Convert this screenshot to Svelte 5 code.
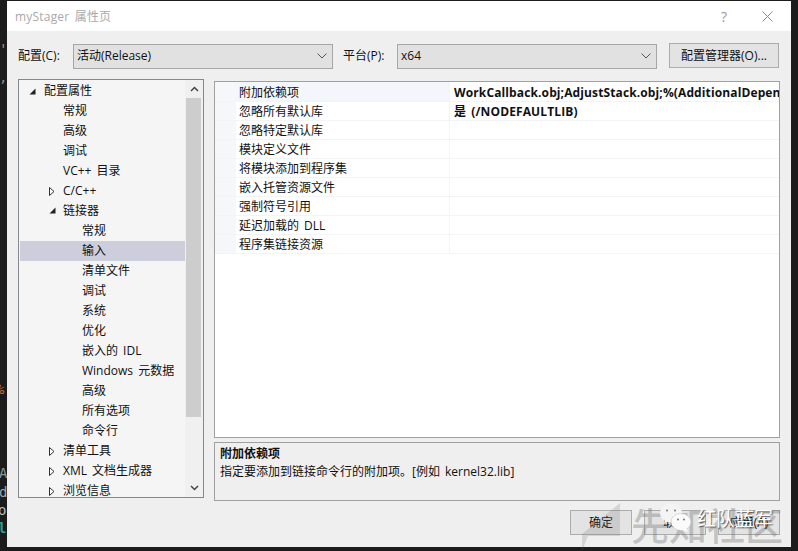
<script lang="ts">
	type TreeRow = { label: string; depth: number; arrow?: 'open' | 'closed'; selected?: boolean };

	const tree: TreeRow[] = [
		{ label: '配置属性', depth: 0, arrow: 'open' },
		{ label: '常规', depth: 1 },
		{ label: '高级', depth: 1 },
		{ label: '调试', depth: 1 },
		{ label: 'VC++ 目录', depth: 1 },
		{ label: 'C/C++', depth: 1, arrow: 'closed' },
		{ label: '链接器', depth: 1, arrow: 'open' },
		{ label: '常规', depth: 2 },
		{ label: '输入', depth: 2, selected: true },
		{ label: '清单文件', depth: 2 },
		{ label: '调试', depth: 2 },
		{ label: '系统', depth: 2 },
		{ label: '优化', depth: 2 },
		{ label: '嵌入的 IDL', depth: 2 },
		{ label: 'Windows 元数据', depth: 2 },
		{ label: '高级', depth: 2 },
		{ label: '所有选项', depth: 2 },
		{ label: '命令行', depth: 2 },
		{ label: '清单工具', depth: 1, arrow: 'closed' },
		{ label: 'XML 文档生成器', depth: 1, arrow: 'closed' },
		{ label: '浏览信息', depth: 1, arrow: 'closed' }
	];

	const props = [
		{ name: '附加依赖项', value: 'WorkCallback.obj;AdjustStack.obj;%(AdditionalDependencies)', active: true },
		{ name: '忽略所有默认库', value: '是 (/NODEFAULTLIB)' },
		{ name: '忽略特定默认库', value: '' },
		{ name: '模块定义文件', value: '' },
		{ name: '将模块添加到程序集', value: '' },
		{ name: '嵌入托管资源文件', value: '' },
		{ name: '强制符号引用', value: '' },
		{ name: '延迟加载的 DLL', value: '' },
		{ name: '程序集链接资源', value: '' }
	];
</script>

<div class="desktop">
	<span class="bit bit-a">'</span>
	<span class="bit bit-b">,</span>
	<span class="bit bit-c">%</span>
	<span class="bit bit-d">A</span>
	<span class="bit bit-e">d</span>
	<span class="bit bit-f">o</span>
	<span class="bit bit-g">l</span>

	<div class="dialog">
		<header class="titlebar">
			<span class="title">myStager 属性页</span>
			<span class="help">?</span>
			<svg class="close" width="11" height="11" viewBox="0 0 11 11">
				<path d="M.5.5l10 10M10.500.5l-10 10" stroke="#8c8c8c" fill="none" />
			</svg>
		</header>

		<div class="content">
			<div class="toolbar">
				<span class="lbl lbl-config">配置(C):</span>
				<div class="select">
					<span>活动(Release)</span>
					<svg width="10" height="6" viewBox="0 0 10 6"><path d="M.5.5L5 5 9.500.5" stroke="#555" fill="none" /></svg>
				</div>
				<span class="lbl lbl-platform">平台(P):</span>
				<div class="select">
					<span>x64</span>
					<svg width="10" height="6" viewBox="0 0 10 6"><path d="M.5.5L5 5 9.500.5" stroke="#555" fill="none" /></svg>
				</div>
				<button class="btn btn-manager">配置管理器(O)...</button>
			</div>

			<div class="main">
				<div class="tree">
					<div class="tree-list">
						{#each tree as row}
							<div class="tree-row depth-{row.depth}" class:selected={row.selected}>
								{#if row.arrow === 'open'}
									<svg class="arrow" width="7" height="7" viewBox="0 0 7 7"><path d="M6.500.5v6h-6z" fill="#222" /></svg>
								{:else if row.arrow === 'closed'}
									<svg class="arrow" width="6" height="9" viewBox="0 0 6 9"><path d="M.5.5l4.500 4-4.500 4z" fill="#fff" stroke="#333" /></svg>
								{/if}
								<span>{row.label}</span>
							</div>
						{/each}
					</div>
					<div class="scrollbar">
						<svg width="9" height="6" viewBox="0 0 9 6"><path d="M1 5l3.500-3.500L8 5" stroke="#444" stroke-width="1.500" fill="none" /></svg>
						<div class="thumb"></div>
						<svg class="down" width="9" height="6" viewBox="0 0 9 6"><path d="M1 1l3.500 3.500L8 1" stroke="#444" stroke-width="1.500" fill="none" /></svg>
					</div>
				</div>

				<div class="right">
					<div class="grid">
						{#each props as p}
							<div class="prop" class:active={p.active}>
								<div class="gutter"></div>
								<div class="name">{p.name}</div>
								<div class="value">{p.value}</div>
							</div>
						{/each}
					</div>
					<div class="desc">
						<div class="desc-title">附加依赖项</div>
						<div>指定要添加到链接命令行的附加项。[例如 kernel32.lib]</div>
					</div>
				</div>
			</div>

			<div class="actions">
				<button class="btn">确定</button>
				<button class="btn">取消</button>
				<button class="btn">应用(A)</button>
			</div>
		</div>
	</div>

	<!-- watermark pasted over the screenshot -->
	<div class="wm-site">
		<svg class="wm-logo" width="42" height="48" viewBox="0 0 42 48"><path d="M40 0v33H8L2 48V31z" fill="#777" opacity=".22" /></svg>
		<span>先知社区</span>
	</div>
	<div class="wm-wechat">
		<svg width="32" height="30" viewBox="0 0 32 30">
			<ellipse cx="11" cy="10" rx="11" ry="9.500" fill="#f4f4f4" />
			<path d="M5 16l-1 5 6-3z" fill="#f4f4f4" />
			<circle cx="7" cy="7.500" r="1" fill="#777" />
			<circle cx="15" cy="7.500" r="1" fill="#777" />
			<ellipse cx="21" cy="19" rx="10" ry="8.500" fill="#fafafa" stroke="#bbb" stroke-width=".5" />
			<path d="M26 25l2 4-6-2z" fill="#fafafa" />
			<circle cx="18" cy="16.500" r="1" fill="#777" />
			<circle cx="24" cy="16.500" r="1" fill="#777" />
		</svg>
		<span>红队蓝军</span>
	</div>
</div>

<style>
	:global(body) {
		margin: 0;
		background: #1e1e1e;
	}

	.desktop {
		position: relative;
		width: 798px;
		height: 551px;
		overflow: hidden;
		background: #1c1c1c;
		font-family: 'Open Sans', 'Noto Sans CJK SC', sans-serif;
		font-size: 12px;
		word-spacing: 2px;
		color: #111;
	}

	.bit {
		position: absolute;
		left: -1px;
		font-family: 'DejaVu Sans Mono', monospace;
		font-size: 14px;
		line-height: 16px;
		color: #8fb0c8;
	}
	.bit-a { top: 41px; color: #c8895a; }
	.bit-b { top: 69px; color: #8a8a8a; }
	.bit-c { top: 381px; left: -4px; color: #c8703a; }
	.bit-d { top: 465px; left: -1px; color: #8a9aa0; }
	.bit-e { top: 484px; left: -1px; color: #9aa6ae; }
	.bit-f { top: 502px; left: -2px; color: #b0bcc4; }
	.bit-g { top: 520px; left: -2px; color: #2fa08a; font-weight: 700; }

	.dialog {
		position: absolute;
		left: 7px;
		top: 1px;
		width: 784px;
		height: 546px;
		display: flex;
		flex-direction: column;
		background: #efefef;
	}

	.titlebar {
		height: 30px;
		flex: none;
		display: flex;
		align-items: center;
		background: #fff;
		padding: 0 18px 0 8px;
	}
	.title {
		font-size: 12px;
		letter-spacing: 0.2px;
		color: #a9a9a9;
		flex: 1;
	}
	.help {
		font-size: 14px;
		color: #9a9a9a;
		margin-right: 35px;
	}

	.content {
		flex: 1;
		display: flex;
		flex-direction: column;
		padding: 11px 11px 0 11px;
	}

	.toolbar {
		display: flex;
		align-items: center;
		height: 27px;
	}
	.lbl {
		flex: none;
		font-size: 12px;
		padding-bottom: 2px;
	}
	.lbl-config { width: 55px; }
	.lbl-platform { width: 54px; margin-left: 10px; }

	.select {
		box-sizing: border-box;
		width: 260px;
		height: 25px;
		margin-top: 1px;
		display: flex;
		align-items: center;
		justify-content: space-between;
		padding: 0 5px 2px 3px;
		background: #e1e1e1;
		border: 1px solid #a6a6a6;
	}
	.select svg {
		margin-top: 2px;
	}

	.btn {
		box-sizing: border-box;
		font: inherit;
		word-spacing: inherit;
		color: inherit;
		width: 62px;
		height: 25px;
		padding: 0;
		background: #e3e3e3;
		border: 1px solid #acacac;
	}
	.btn-manager {
		width: 110px;
		margin-left: 12px;
		margin-top: -1px;
	}

	.main {
		display: flex;
		margin-top: 10px;
		gap: 10px;
	}

	.tree {
		box-sizing: border-box;
		flex: none;
		width: 186px;
		height: 419px;
		display: flex;
		border: 1px solid #828790;
		background: #f5f5f5;
		overflow: hidden;
	}
	.tree-list {
		flex: 1;
		min-width: 0;
		padding: 1px 0 0 1px;
		overflow: hidden;
	}
	.tree-row {
		position: relative;
		height: 20px;
		line-height: 20px;
		white-space: nowrap;
	}
	.tree-row.selected {
		background: #cccedb;
	}
	.depth-0 { padding-left: 24px; }
	.depth-1 { padding-left: 43px; }
	.depth-2 { padding-left: 62px; }
	.arrow {
		position: absolute;
		top: 7px;
	}
	.depth-0 .arrow { left: 9px; }
	.depth-1 .arrow { left: 29px; top: 6px; }

	.scrollbar {
		flex: none;
		width: 18px;
		display: flex;
		flex-direction: column;
		align-items: center;
		padding-top: 6px;
		box-sizing: border-box;
		background: #f0f0f0;
	}
	.thumb {
		width: 15px;
		height: 319px;
		margin-top: 6px;
		margin-right: 2px;
		background: #cdcdcd;
	}
	.down {
		margin-top: auto;
		margin-bottom: 6px;
	}

	.right {
		flex: 1;
		min-width: 0;
		display: flex;
		flex-direction: column;
		gap: 4px;
		margin-top: 2px;
	}

	.grid {
		box-sizing: border-box;
		height: 357px;
		border: 1px solid #a0a0a0;
		background: #fff;
		overflow: hidden;
	}
	.prop {
		display: flex;
		height: 19px;
		line-height: 19px;
		box-sizing: border-box;
		border-bottom: 1px solid #f2f4f8;
	}
	.prop.active {
		background: #f3f6fb;
		height: 20px;
		line-height: 21px;
	}
	.gutter {
		width: 21px;
		flex: none;
		background: #f5f7fb;
	}
	.name {
		width: 210px;
		flex: none;
		padding-left: 3px;
		border-right: 1px solid #f2f4f8;
	}
	.value {
		flex: 1;
		min-width: 0;
		padding-left: 4px;
		font-weight: 700;
		letter-spacing: 0.12px;
		white-space: nowrap;
		overflow: hidden;
		background: #fff;
	}

	.desc {
		box-sizing: border-box;
		height: 59px;
		padding: 2px 5px;
		border: 1px solid #a0a0a0;
		line-height: 18px;
	}
	.desc-title {
		font-weight: 700;
	}

	.actions {
		display: flex;
		justify-content: flex-end;
		gap: 12px;
		margin-top: 9px;
	}
	.actions .btn {
		padding-bottom: 2px;
	}

	.wm-site {
		position: absolute;
		left: 580px;
		top: 503px;
		display: flex;
		align-items: flex-start;
		gap: 9px;
		font-size: 38px;
		line-height: 44px;
		font-weight: 500;
		color: rgba(110, 110, 110, 0.35);
		white-space: nowrap;
	}

	.wm-wechat {
		position: absolute;
		left: 660px;
		top: 503px;
		display: flex;
		align-items: center;
		gap: 5px;
		font-size: 19px;
		color: #fff;
		text-shadow: 1px 1px 1px rgba(0, 0, 0, 0.55);
	}
</style>
